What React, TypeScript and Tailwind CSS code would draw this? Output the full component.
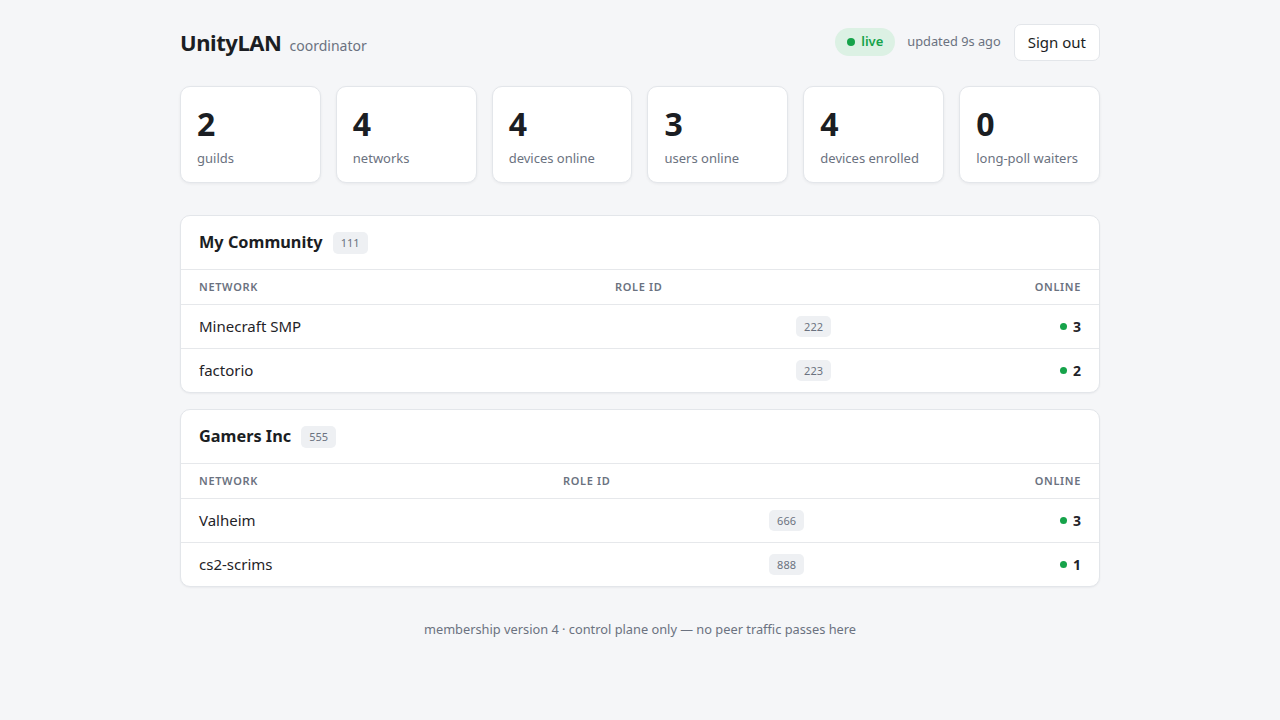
import React from 'react';

type Net = { name: string; role: string; online: number };
type Guild = { name: string; id: string; cols: [string, string, string]; nets: Net[] };

const stats = [
  { value: 2, label: 'guilds' },
  { value: 4, label: 'networks' },
  { value: 4, label: 'devices online' },
  { value: 3, label: 'users online' },
  { value: 4, label: 'devices enrolled' },
  { value: 0, label: 'long-poll waiters' },
];

// column widths mimic the auto table layout of each guild
const guilds: Guild[] = [
  {
    name: 'My Community',
    id: '111',
    cols: ['w-[418px]', 'w-[250px]', 'w-auto'],
    nets: [
      { name: 'Minecraft SMP', role: '222', online: 3 },
      { name: 'factorio', role: '223', online: 2 },
    ],
  },
  {
    name: 'Gamers Inc',
    id: '555',
    cols: ['w-[366px]', 'w-[275px]', 'w-auto'],
    nets: [
      { name: 'Valheim', role: '666', online: 3 },
      { name: 'cs2-scrims', role: '888', online: 1 },
    ],
  },
];

const GuildCard: React.FC<{ guild: Guild }> = ({ guild }) => (
  <div className="bg-white border border-[#e3e6ea] rounded-[10px] shadow-[0_1px_2px_rgba(16,24,40,0.05)] overflow-hidden">
    <div className="h-[54px] px-[18px] flex items-center gap-[10px] border-b border-[#e6e8eb]">
      <h2 className="text-[16.3px] font-bold text-[#1b1e23]">{guild.name}</h2>
      <span className="text-[11px] text-[#6b7280] bg-[#eef0f3] rounded-[5px] px-[8px] leading-[22px]">{guild.id}</span>
    </div>
    <table className="w-full table-fixed border-collapse">
      <colgroup>
        <col className={guild.cols[0]} />
        <col className={guild.cols[1]} />
        <col className={guild.cols[2]} />
      </colgroup>
      <thead>
        <tr className="text-[11px] font-semibold tracking-[0.06em] uppercase text-[#6b7280]">
          <th className="h-[34px] text-left font-semibold px-[18px] py-0 leading-[16px]">Network</th>
          <th className="h-[34px] text-left font-semibold px-[16px] py-0 leading-[16px]">Role ID</th>
          <th className="h-[34px] text-right font-semibold px-[18px] py-0 leading-[16px]">Online</th>
        </tr>
      </thead>
      <tbody>
        {guild.nets.map((n) => (
          <tr key={n.name} className="border-t border-[#e6e8eb]">
            <td className="h-[44px] px-[18px] py-0 align-middle text-[15px] leading-[21px] text-[#1f2328]">{n.name}</td>
            <td className="h-[44px] px-[18px] py-0 align-middle text-right leading-[21px]">
              <span className="inline-block align-middle text-[11px] text-[#6b7280] bg-[#eef0f3] rounded-[5px] px-[8px] leading-[21px]">{n.role}</span>
            </td>
            <td className="h-[44px] px-[18px] py-0 align-middle text-right leading-[21px]">
              <span className="inline-flex align-middle items-center gap-[6px] text-[14px] font-bold text-[#1f2328] leading-[21px]">
                <span className="w-[7px] h-[7px] rounded-full bg-[#16a34a]" />
                {n.online}
              </span>
            </td>
          </tr>
        ))}
      </tbody>
    </table>
  </div>
);

export default function App() {
  return (
    <div className="min-h-screen bg-[#f5f6f8] font-['Noto_Sans',sans-serif] text-[#1b1e23]">
      <div className="w-[920px] mx-auto pt-6 pb-10">
        <header className="h-[36px] flex items-center justify-between">
          <div className="flex items-baseline gap-[8px]">
            <h1 className="text-[22px] leading-[28px] font-bold tracking-[-0.02em]">UnityLAN</h1>
            <span className="text-[14px] text-[#6b7280]">coordinator</span>
          </div>
          <div className="flex items-center">
            <span className="flex items-center gap-[6px] bg-[#dcf1e4] text-[#16a34a] text-[13px] font-semibold rounded-full h-[28px] px-[12px]">
              <span className="w-[8px] h-[8px] rounded-full bg-[#16a34a]" />
              live
            </span>
            <span className="ml-[12px] text-[12.8px] text-[#6b7280]">updated 9s ago</span>
            <button className="ml-[13px] h-[37px] px-[13px] bg-white border border-[#e3e6ea] rounded-[7px] text-[15px] text-[#1b1e23]">
              Sign out
            </button>
          </div>
        </header>

        <section className="mt-[26px] grid grid-cols-6 gap-[15px]">
          {stats.map((s) => (
            <div key={s.label} className="h-[97px] bg-white border border-[#e3e6ea] rounded-[10px] shadow-[0_1px_3px_rgba(16,24,40,0.06)] px-4 pt-[21px]">
              <div className="text-[32px] leading-[32px] font-bold text-[#1b1e23]">{s.value}</div>
              <div className="mt-[9px] text-[13px] leading-[18px] text-[#6b7280]">{s.label}</div>
            </div>
          ))}
        </section>

        <section className="mt-[32px] flex flex-col gap-[16px]">
          {guilds.map((g) => (
            <GuildCard key={g.id} guild={g} />
          ))}
        </section>

        <footer className="mt-[33px] text-center text-[12.8px] text-[#6b7280]">
          membership version 4 · control plane only — no peer traffic passes here
        </footer>
      </div>
    </div>
  );
}
